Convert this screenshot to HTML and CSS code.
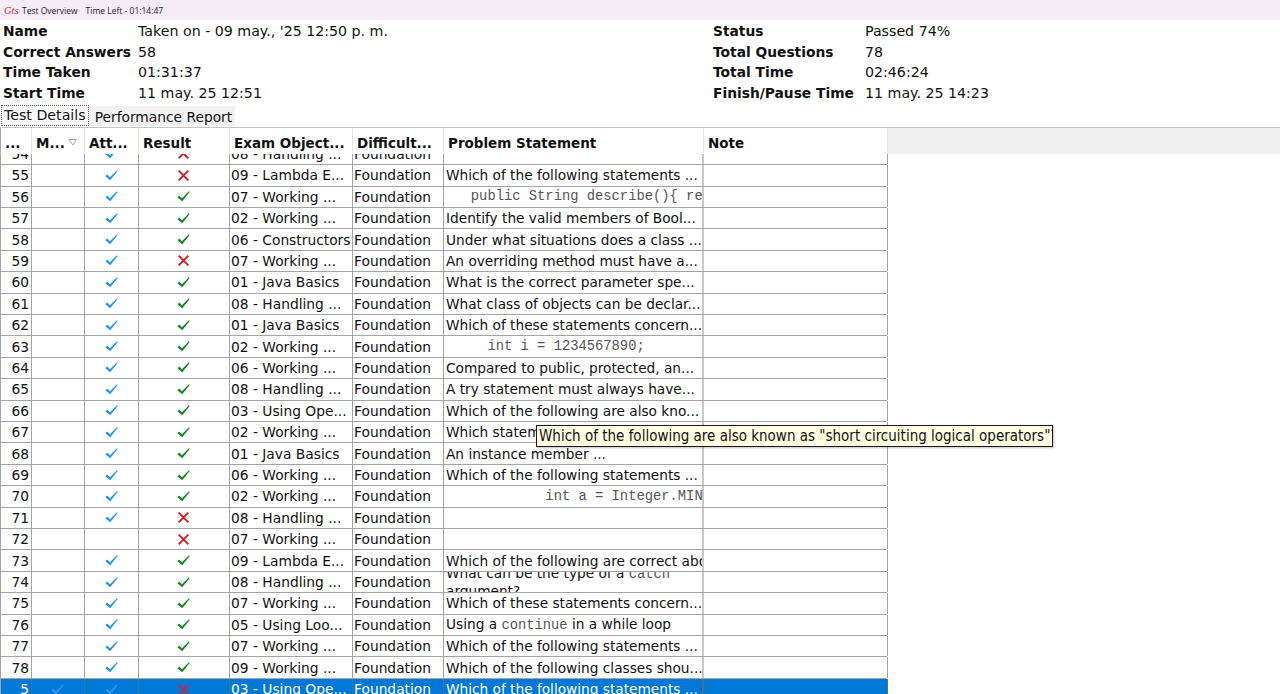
FILE: index.html
```html
<!doctype html>
<html>
<head>
<title>Test Overview</title>
<link rel="stylesheet" href="styles.css">
</head>
<body>

<svg class="defs" width="0" height="0">
    <symbol id="tick" viewBox="0 0 12 12"><path d="M.4 6.6 2 5l2.6 2.5L11 1.2l.7.6-6.9 8.6z"/></symbol>
    <symbol id="cross" viewBox="0 0 12 12"><path d="M1.5 1.5l9 9M10.5 1.5l-9 9" fill="none" stroke="currentColor" stroke-width="1.7"/></symbol>
</svg>

<div class="titlebar">
    <span class="logo">Gts</span>
    <span>Test Overview</span>
    <span>Time Left - 01:14:47</span>
</div>

<div class="summary">
    <dl class="facts">
        <dt>Name</dt><dd>Taken on - 09 may., '25 12:50 p. m.</dd>
        <dt>Correct Answers</dt><dd>58</dd>
        <dt>Time Taken</dt><dd>01:31:37</dd>
        <dt>Start Time</dt><dd>11 may. 25 12:51</dd>
    </dl>
    <dl class="facts facts-right">
        <dt>Status</dt><dd>Passed 74%</dd>
        <dt>Total Questions</dt><dd>78</dd>
        <dt>Total Time</dt><dd>02:46:24</dd>
        <dt>Finish/Pause Time</dt><dd>11 may. 25 14:23</dd>
    </dl>
</div>

<div class="tabs">
    <span class="tab active">Test Details</span>
    <span class="tab">Performance Report</span>
</div>

<div class="head">
    <div class="row head-row">
        <span class="cell num">...</span>
        <span class="cell">M...<svg class="sort" width="9" height="7" viewBox="0 0 9 7"><path d="M.5.5h8L5 6z" fill="none" stroke="#a8a8a8"/></svg></span>
        <span class="cell">Att...</span>
        <span class="cell">Result</span>
        <span class="cell">Exam Object...</span>
        <span class="cell">Difficult...</span>
        <span class="cell">Problem Statement</span>
        <span class="cell">Note</span>
    </div>
</div>

<div class="body">
    <div class="rows">
        <div class="row"><span class="cell num">54</span><span class="cell"></span><span class="cell mark"><svg class="tick"><use href="#tick"/></svg></span><span class="cell mark"><svg class="bad"><use href="#cross"/></svg></span><span class="cell">08 - Handling ...</span><span class="cell">Foundation</span><span class="cell q"></span><span class="cell"></span></div>
        <div class="row"><span class="cell num">55</span><span class="cell"></span><span class="cell mark"><svg class="tick"><use href="#tick"/></svg></span><span class="cell mark"><svg class="bad"><use href="#cross"/></svg></span><span class="cell">09 - Lambda E...</span><span class="cell">Foundation</span><span class="cell q">Which of the following statements ...</span><span class="cell"></span></div>
        <div class="row"><span class="cell num">56</span><span class="cell"></span><span class="cell mark"><svg class="tick"><use href="#tick"/></svg></span><span class="cell mark"><svg class="good"><use href="#tick"/></svg></span><span class="cell">07 - Working ...</span><span class="cell">Foundation</span><span class="cell q"><code>   public String describe(){ return</code></span><span class="cell"></span></div>
        <div class="row"><span class="cell num">57</span><span class="cell"></span><span class="cell mark"><svg class="tick"><use href="#tick"/></svg></span><span class="cell mark"><svg class="good"><use href="#tick"/></svg></span><span class="cell">02 - Working ...</span><span class="cell">Foundation</span><span class="cell q">Identify the valid members of Bool...</span><span class="cell"></span></div>
        <div class="row"><span class="cell num">58</span><span class="cell"></span><span class="cell mark"><svg class="tick"><use href="#tick"/></svg></span><span class="cell mark"><svg class="good"><use href="#tick"/></svg></span><span class="cell">06 - Constructors</span><span class="cell">Foundation</span><span class="cell q">Under what situations does a class ...</span><span class="cell"></span></div>
        <div class="row"><span class="cell num">59</span><span class="cell"></span><span class="cell mark"><svg class="tick"><use href="#tick"/></svg></span><span class="cell mark"><svg class="bad"><use href="#cross"/></svg></span><span class="cell">07 - Working ...</span><span class="cell">Foundation</span><span class="cell q">An overriding method must have a...</span><span class="cell"></span></div>
        <div class="row"><span class="cell num">60</span><span class="cell"></span><span class="cell mark"><svg class="tick"><use href="#tick"/></svg></span><span class="cell mark"><svg class="good"><use href="#tick"/></svg></span><span class="cell">01 - Java Basics</span><span class="cell">Foundation</span><span class="cell q">What is the correct parameter spe...</span><span class="cell"></span></div>
        <div class="row"><span class="cell num">61</span><span class="cell"></span><span class="cell mark"><svg class="tick"><use href="#tick"/></svg></span><span class="cell mark"><svg class="good"><use href="#tick"/></svg></span><span class="cell">08 - Handling ...</span><span class="cell">Foundation</span><span class="cell q">What class of objects can be declar...</span><span class="cell"></span></div>
        <div class="row"><span class="cell num">62</span><span class="cell"></span><span class="cell mark"><svg class="tick"><use href="#tick"/></svg></span><span class="cell mark"><svg class="good"><use href="#tick"/></svg></span><span class="cell">01 - Java Basics</span><span class="cell">Foundation</span><span class="cell q">Which of these statements concern...</span><span class="cell"></span></div>
        <div class="row"><span class="cell num">63</span><span class="cell"></span><span class="cell mark"><svg class="tick"><use href="#tick"/></svg></span><span class="cell mark"><svg class="good"><use href="#tick"/></svg></span><span class="cell">02 - Working ...</span><span class="cell">Foundation</span><span class="cell q"><code>     int i = 1234567890;</code></span><span class="cell"></span></div>
        <div class="row"><span class="cell num">64</span><span class="cell"></span><span class="cell mark"><svg class="tick"><use href="#tick"/></svg></span><span class="cell mark"><svg class="good"><use href="#tick"/></svg></span><span class="cell">06 - Working ...</span><span class="cell">Foundation</span><span class="cell q">Compared to public, protected, an...</span><span class="cell"></span></div>
        <div class="row"><span class="cell num">65</span><span class="cell"></span><span class="cell mark"><svg class="tick"><use href="#tick"/></svg></span><span class="cell mark"><svg class="good"><use href="#tick"/></svg></span><span class="cell">08 - Handling ...</span><span class="cell">Foundation</span><span class="cell q">A try statement must always have...</span><span class="cell"></span></div>
        <div class="row"><span class="cell num">66</span><span class="cell"></span><span class="cell mark"><svg class="tick"><use href="#tick"/></svg></span><span class="cell mark"><svg class="good"><use href="#tick"/></svg></span><span class="cell">03 - Using Ope...</span><span class="cell">Foundation</span><span class="cell q">Which of the following are also kno...</span><span class="cell"></span></div>
        <div class="row"><span class="cell num">67</span><span class="cell"></span><span class="cell mark"><svg class="tick"><use href="#tick"/></svg></span><span class="cell mark"><svg class="good"><use href="#tick"/></svg></span><span class="cell">02 - Working ...</span><span class="cell">Foundation</span><span class="cell q">Which statement ...</span><span class="cell"></span></div>
        <div class="row"><span class="cell num">68</span><span class="cell"></span><span class="cell mark"><svg class="tick"><use href="#tick"/></svg></span><span class="cell mark"><svg class="good"><use href="#tick"/></svg></span><span class="cell">01 - Java Basics</span><span class="cell">Foundation</span><span class="cell q">An instance member ...</span><span class="cell"></span></div>
        <div class="row"><span class="cell num">69</span><span class="cell"></span><span class="cell mark"><svg class="tick"><use href="#tick"/></svg></span><span class="cell mark"><svg class="good"><use href="#tick"/></svg></span><span class="cell">06 - Working ...</span><span class="cell">Foundation</span><span class="cell q">Which of the following statements ...</span><span class="cell"></span></div>
        <div class="row"><span class="cell num">70</span><span class="cell"></span><span class="cell mark"><svg class="tick"><use href="#tick"/></svg></span><span class="cell mark"><svg class="good"><use href="#tick"/></svg></span><span class="cell">02 - Working ...</span><span class="cell">Foundation</span><span class="cell q"><code>            int a = Integer.MIN_VALUE;</code></span><span class="cell"></span></div>
        <div class="row"><span class="cell num">71</span><span class="cell"></span><span class="cell mark"><svg class="tick"><use href="#tick"/></svg></span><span class="cell mark"><svg class="bad"><use href="#cross"/></svg></span><span class="cell">08 - Handling ...</span><span class="cell">Foundation</span><span class="cell q"></span><span class="cell"></span></div>
        <div class="row"><span class="cell num">72</span><span class="cell"></span><span class="cell mark"></span><span class="cell mark"><svg class="bad"><use href="#cross"/></svg></span><span class="cell">07 - Working ...</span><span class="cell">Foundation</span><span class="cell q"></span><span class="cell"></span></div>
        <div class="row"><span class="cell num">73</span><span class="cell"></span><span class="cell mark"><svg class="tick"><use href="#tick"/></svg></span><span class="cell mark"><svg class="good"><use href="#tick"/></svg></span><span class="cell">09 - Lambda E...</span><span class="cell">Foundation</span><span class="cell q">Which of the following are correct about</span><span class="cell"></span></div>
        <div class="row"><span class="cell num">74</span><span class="cell"></span><span class="cell mark"><svg class="tick"><use href="#tick"/></svg></span><span class="cell mark"><svg class="good"><use href="#tick"/></svg></span><span class="cell">08 - Handling ...</span><span class="cell">Foundation</span><span class="cell q wrap"><span>What can be the type of a <code>catch</code> argument?</span></span><span class="cell"></span></div>
        <div class="row"><span class="cell num">75</span><span class="cell"></span><span class="cell mark"><svg class="tick"><use href="#tick"/></svg></span><span class="cell mark"><svg class="good"><use href="#tick"/></svg></span><span class="cell">07 - Working ...</span><span class="cell">Foundation</span><span class="cell q">Which of these statements concern...</span><span class="cell"></span></div>
        <div class="row"><span class="cell num">76</span><span class="cell"></span><span class="cell mark"><svg class="tick"><use href="#tick"/></svg></span><span class="cell mark"><svg class="good"><use href="#tick"/></svg></span><span class="cell">05 - Using Loo...</span><span class="cell">Foundation</span><span class="cell q"><span>Using a <code>continue</code> in a while loop</span></span><span class="cell"></span></div>
        <div class="row"><span class="cell num">77</span><span class="cell"></span><span class="cell mark"><svg class="tick"><use href="#tick"/></svg></span><span class="cell mark"><svg class="good"><use href="#tick"/></svg></span><span class="cell">07 - Working ...</span><span class="cell">Foundation</span><span class="cell q">Which of the following statements ...</span><span class="cell"></span></div>
        <div class="row"><span class="cell num">78</span><span class="cell"></span><span class="cell mark"><svg class="tick"><use href="#tick"/></svg></span><span class="cell mark"><svg class="good"><use href="#tick"/></svg></span><span class="cell">09 - Working ...</span><span class="cell">Foundation</span><span class="cell q">Which of the following classes shou...</span><span class="cell"></span></div>
        <div class="row selected"><span class="cell num">5</span><span class="cell mark"><svg class="tick"><use href="#tick"/></svg></span><span class="cell mark"><svg class="tick"><use href="#tick"/></svg></span><span class="cell mark"><svg class="bad"><use href="#cross"/></svg></span><span class="cell">03 - Using Ope...</span><span class="cell">Foundation</span><span class="cell q">Which of the following statements ...</span><span class="cell"></span></div>
    </div>
</div>

<div class="tooltip">Which of the following are also known as "short circuiting logical operators"?</div>

</body>
</html>
```

FILE: styles.css
```css
html,body{
    height: 100%;
    margin: 0;
    overflow: hidden;
}
body{
    background-color: #ffffff;
    font-family: "DejaVu Sans",Verdana,sans-serif;
    font-size: 13.8px;
    color: #111111;
    display: flex;
    flex-direction: column;
}
.defs{
    position: absolute;
}

.titlebar{
    height: 20px;
    flex: none;
    background-color: #f6ecf6;
    display: flex;
    align-items: center;
    gap: 8px;
    padding-left: 4px;
    font-family: "Open Sans",sans-serif;
    font-size: 8.5px;
    color: #222222;
}
.logo{
    width: 14px;
    margin-right: -4px;
    font-family: "Liberation Serif",serif;
    font-style: italic;
    font-size: 10.5px;
    color: #c8323c;
}

.summary{
    flex: none;
    height: 85px;
    display: flex;
}
.facts{
    margin: 0;
    padding: 1px 0 0 3px;
    width: 707px;
    display: grid;
    grid-template-columns: 135px 1fr;
    grid-auto-rows: 20.6px;
    align-items: center;
}
.facts-right{
    width: auto;
    padding-left: 3px;
    grid-template-columns: 152px 1fr;
}
.facts dt{
    font-weight: bold;
    white-space: nowrap;
}
.facts dd{
    margin: 0;
    font-size: 14.2px;
    white-space: nowrap;
}

.tabs{
    flex: none;
    height: 21px;
    display: flex;
    align-items: flex-end;
    padding-left: 1px;
}
.tab{
    height: 20px;
    padding: 0 3px 0 6px;
    background-color: #f2f2f2;
    line-height: 22px;
    white-space: nowrap;
}
.tab.active{
    height: 21px;
    padding: 0 2px;
    background-color: #ffffff;
    border: 1px dotted #555555;
    box-sizing: border-box;
    font-size: 14.2px;
    line-height: 18px;
}

.head{
    flex: none;
    margin-top: 1px;
    height: 26px;
    border-top: 1px solid #c4c4c4;
    box-sizing: content-box;
    background-color: #f0f0f0;
}
.row{
    display: grid;
    grid-template-columns: 31px 53px 54px 91px 123px 91px 260px 184px;
    width: 887px;
    height: 21.42px;
    box-sizing: border-box;
    border-bottom: 1px solid #a4a4a4;
    border-left: 1px solid #a4a4a4;
}
.cell{
    display: flex;
    align-items: center;
    padding-left: 1px;
    border-right: 1px solid #a4a4a4;
    white-space: nowrap;
    overflow: hidden;
    min-width: 0;
}
.num{
    justify-content: flex-end;
    padding: 0 2px 0 0;
}
.mark{
    justify-content: center;
    padding: 0 1px 0 0;
}
.mark svg{
    width: 13px;
    height: 13px;
}
.tick{
    fill: #2196f3;
}
.good{
    fill: #14851f;
}
.bad{
    color: #e0141e;
}
.q{
    padding-left: 2px;
    font-size: 13.7px;
    border-right-color: #c8c8c8;
    border-right-width: 2px;
}
code{
    font-family: "Liberation Mono","Courier New",monospace;
    font-size: 13.8px;
    color: #555555;
    white-space: pre;
}
.wrap{
    white-space: normal;
    line-height: 17px;
}
.wrap > span{
    flex: none;
    width: 100%;
}

.head-row{
    height: 26px;
    background-color: #ffffff;
    border-color: #ffffff;
    border-left-color: #a4a4a4;
    font-weight: bold;
    font-size: 13.5px;
}
.head-row .cell{
    padding: 5px 0 0 4px;
    border-right-color: #e4e4e4;
}
.head-row .num{
    justify-content: flex-start;
}
.sort{
    margin-left: 3px;
    margin-bottom: 2px;
}

.body{
    flex: 1;
    min-height: 0;
    overflow: hidden;
}
.rows{
    margin-top: -10.3px;
}
.selected{
    background-color: #0078d7;
    color: #ffffff;
    border-bottom-color: #0078d7;
}
.selected .cell{
    border-right-color: #4a6f90;
}
.selected .tick{
    fill: #2f9bf0;
}
.selected .bad{
    color: #c4283c;
}

.tooltip{
    position: absolute;
    left: 536px;
    top: 425px;
    width: 517px;
    height: 22px;
    box-sizing: border-box;
    border: 1px solid #1a1a1a;
    background-color: #ffffe1;
    padding-left: 2px;
    font-family: "DejaVu Sans Condensed","DejaVu Sans",sans-serif;
    font-stretch: condensed;
    font-size: 15px;
    line-height: 20px;
    white-space: nowrap;
    overflow: hidden;
    box-shadow: 1px 1px 2px rgba(0,0,0,.25);
}
```
